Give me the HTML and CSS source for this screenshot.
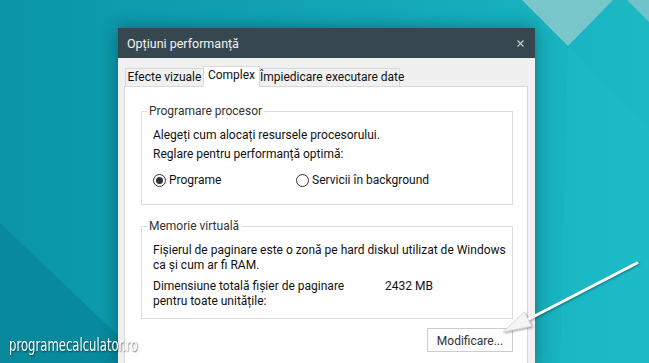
FILE: index.html
```html
<!DOCTYPE html>
<html lang="ro">
<head>
<meta charset="utf-8">
<title>Opțiuni performanță</title>
<link rel="stylesheet" href="styles.css">
</head>
<body>
<div class="desktop">
  <svg class="wallpaper" width="649" height="363" viewBox="0 0 649 363" aria-hidden="true">
    <defs>
      <linearGradient id="bg" x1="0" y1="0" x2="1" y2="0">
        <stop offset="0" stop-color="#0a95a8"/>
        <stop offset="0.55" stop-color="#12a6b6"/>
        <stop offset="1" stop-color="#1cb9c5"/>
      </linearGradient>
    </defs>
    <rect width="649" height="363" fill="url(#bg)"/>
    <polygon points="0,223 147,363 0,363" fill="#08879a" opacity="0.85"/>
    <polygon points="522,0 613,0 568,46" fill="#7ac7cb"/>
    <polygon points="627,0 649,0 649,22" fill="#6fc3c8"/>
    <polygon points="568,46 649,130 649,363 560,363" fill="#20bfca" opacity="0.35"/>
  </svg>

  <div class="dialog">
    <div class="titlebar">
      <span class="title">Opțiuni performanță</span>
      <svg class="close" width="7" height="7" viewBox="0 0 7 7" aria-hidden="true">
        <path d="M0.5 0.5 L6.5 6.5 M6.5 0.5 L0.5 6.5" stroke="#c9cfd2" stroke-width="1.1" fill="none"/>
      </svg>
    </div>
    <div class="dialog-body">
      <div class="tabs">
        <div class="tab tab-visual">Efecte vizuale</div>
        <div class="tab tab-active">Complex</div>
        <div class="tab tab-dep">Împiedicare executare date</div>
      </div>
      <div class="panel">
        <fieldset class="group group-cpu">
          <legend>Programare procesor</legend>
          <p class="line">Alegeți cum alocați resursele procesorului.</p>
          <p class="line">Reglare pentru performanță optimă:</p>
          <div class="radios">
            <label class="radio radio-first"><span class="dot dot-checked"></span>Programe</label>
            <label class="radio"><span class="dot"></span>Servicii în background</label>
          </div>
        </fieldset>
        <fieldset class="group group-mem">
          <legend>Memorie virtuală</legend>
          <p class="para">Fișierul de paginare este o zonă pe hard diskul utilizat de Windows<br>ca și cum ar fi RAM.</p>
          <div class="size-row">
            <span class="size-label">Dimensiune totală fișier de paginare<br>pentru toate unitățile:</span>
            <span class="size-value">2432 MB</span>
          </div>
        </fieldset>
        <div class="actions">
          <button class="btn" type="button">Modificare...</button>
        </div>
      </div>
    </div>
  </div>

  <div class="watermark">programecalculator.ro</div>

  <svg class="arrow" width="649" height="363" viewBox="0 0 649 363" aria-hidden="true">
    <line x1="637" y1="263" x2="527" y2="320" stroke="#ffffff" stroke-width="3" stroke-linecap="round"/>
    <polygon points="503,332 524.3,312.1 531.7,326.3" fill="#f4f4f4" stroke="#d6d6d6" stroke-width="0.8" stroke-linejoin="round"/>
  </svg>
</div>
</body>
</html>
```

FILE: styles.css
```css
* {
  box-sizing: border-box;
}

html, body {
  margin: 0;
  padding: 0;
}

body {
  font-family: Roboto, "Noto Sans", sans-serif;
  font-size: 12px;
  line-height: 16px;
  color: #111;
}

.desktop {
  position: relative;
  width: 649px;
  height: 363px;
  overflow: hidden;
  padding: 28px 0 0 118px;
}

.wallpaper {
  position: absolute;
  left: 0;
  top: 0;
  z-index: -1;
  display: block;
}

.dialog {
  width: 417px;
  height: 340px;
  background: #f0f0f0;
  box-shadow: 0 0 16px rgba(0, 40, 50, 0.45);
}

.titlebar {
  height: 30px;
  background: #37474f;
  color: #f2f4f5;
  display: flex;
  align-items: center;
  justify-content: space-between;
  padding: 1px 11px 0 9px;
}

.title {
  font-size: 12.5px;
  line-height: 16px;
}

.close {
  display: block;
}

.dialog-body {
  padding: 8px 7px 0 6px;
}

.tabs {
  display: flex;
  align-items: flex-end;
  padding-left: 1px;
  height: 20px;
}

.tab {
  height: 18px;
  border: 1px solid #d9d9d9;
  border-bottom: none;
  background: #f0f0f0;
  text-align: center;
  line-height: 17px;
  white-space: nowrap;
}

.tab-visual {
  width: 79px;
}

.tab-active {
  position: relative;
  width: 57px;
  height: 21px;
  margin-left: -1px;
  margin-bottom: -1px;
  background: #ffffff;
}

.tab-dep {
  width: 141px;
  margin-left: -1px;
}

.panel {
  width: 404px;
  height: 300px;
  background: #ffffff;
  border: 1px solid #d9d9d9;
  padding: 16px 14px 0 16px;
}

.group {
  margin: 0;
  border: 1px solid #dcdcdc;
  padding: 5px 0 16px 11px;
  min-width: 0;
}

.group legend {
  padding: 0 2px;
  margin-left: -6px;
  color: #333;
  line-height: 17px;
}

.group-mem {
  margin-top: 13px;
  padding: 7px 0 9px 11px;
}

.line {
  margin: 0;
  line-height: 19px;
  padding-top: 1px;
  height: 19px;
}

.radios {
  display: flex;
  margin-top: 9px;
  line-height: 17px;
  height: 16px;
}

.radio {
  display: flex;
  align-items: center;
}

.radio-first {
  width: 143px;
}

.dot {
  width: 13px;
  height: 13px;
  border: 1px solid #333;
  border-radius: 50%;
  background: #fff;
  margin-right: 3px;
  margin-top: 1px;
  display: flex;
  align-items: center;
  justify-content: center;
}

.dot-checked::after {
  content: "";
  width: 7px;
  height: 7px;
  border-radius: 50%;
  background: #333;
}

.para {
  margin: 0;
  line-height: 15px;
  padding-top: 1px;
}

.size-row {
  display: flex;
  margin-top: 6px;
  line-height: 15px;
}

.size-label {
  width: 232px;
}

.actions {
  display: flex;
  justify-content: flex-end;
  margin-top: 9px;
}

.btn {
  width: 86px;
  height: 24px;
  border: 1px solid #cccccc;
  background: #fdfdfd;
  font-family: inherit;
  font-size: 12px;
  line-height: 16px;
  color: #333;
  padding: 1px 0 0;
}

.watermark {
  position: absolute;
  left: 9px;
  top: 335px;
  font-family: "DejaVu Sans", sans-serif;
  font-stretch: condensed;
  font-size: 18px;
  line-height: 20px;
  color: #ffffff;
  white-space: nowrap;
  transform: scaleX(0.72);
  transform-origin: left top;
  text-shadow: 1px 1px 2px rgba(0, 0, 0, 0.6);
}

.arrow {
  position: absolute;
  left: 0;
  top: 0;
  filter: drop-shadow(1px 1px 1px rgba(0, 0, 0, 0.35));
}
```
